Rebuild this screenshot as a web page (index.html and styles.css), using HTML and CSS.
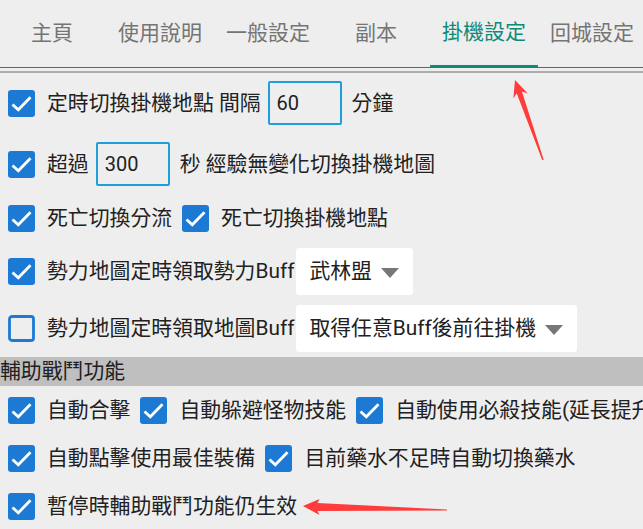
FILE: index.html
```html
<!DOCTYPE html>
<html>
<head>
<meta charset="utf-8">
<link rel="stylesheet" href="styles.css">
</head>
<body>
<div class="page">
  <div class="tabbar">
    <div class="tabs">
      <div class="tab">主頁</div>
      <div class="tab">使用說明</div>
      <div class="tab">一般設定</div>
      <div class="tab">副本</div>
      <div class="tab active">掛機設定</div>
      <div class="tab">回城設定</div>
    </div>
  </div>
  <div class="divider"></div>

  <div class="settings">
    <div class="row row-input r1">
      <div class="item first">
        <svg class="cb" viewBox="0 0 27 27"><rect width="27" height="27" rx="3" class="cb-fill"/><path d="M4.5 14.5 L10.3 19.8 L22.5 7.3" class="cb-mark"/></svg>
        <span class="label">定時切換掛機地點 間隔</span>
      </div>
      <div class="num">60</div>
      <span class="label after">分鐘</span>
    </div>

    <div class="row row-input r2">
      <div class="item first">
        <svg class="cb" viewBox="0 0 27 27"><rect width="27" height="27" rx="3" class="cb-fill"/><path d="M4.5 14.5 L10.3 19.8 L22.5 7.3" class="cb-mark"/></svg>
        <span class="label">超過</span>
      </div>
      <div class="num">300</div>
      <span class="label after">秒 經驗無變化切換掛機地圖</span>
    </div>

    <div class="row row-plain r3">
      <div class="item first">
        <svg class="cb" viewBox="0 0 27 27"><rect width="27" height="27" rx="3" class="cb-fill"/><path d="M4.5 14.5 L10.3 19.8 L22.5 7.3" class="cb-mark"/></svg>
        <span class="label">死亡切換分流</span>
      </div>
      <div class="item">
        <svg class="cb" viewBox="0 0 27 27"><rect width="27" height="27" rx="3" class="cb-fill"/><path d="M4.5 14.5 L10.3 19.8 L22.5 7.3" class="cb-mark"/></svg>
        <span class="label">死亡切換掛機地點</span>
      </div>
    </div>

    <div class="row row-spinner r4">
      <div class="item first">
        <svg class="cb" viewBox="0 0 27 27"><rect width="27" height="27" rx="3" class="cb-fill"/><path d="M4.5 14.5 L10.3 19.8 L22.5 7.3" class="cb-mark"/></svg>
        <span class="label">勢力地圖定時領取勢力Buff</span>
      </div>
      <div class="spinner">
        <span class="label">武林盟</span>
        <span class="caret"></span>
      </div>
    </div>

    <div class="row row-spinner r5">
      <div class="item first">
        <svg class="cb" viewBox="0 0 27 27"><rect x="1.5" y="1.5" width="24" height="24" rx="2.5" class="cb-empty"/></svg>
        <span class="label">勢力地圖定時領取地圖Buff</span>
      </div>
      <div class="spinner">
        <span class="label">取得任意Buff後前往掛機</span>
        <span class="caret"></span>
      </div>
    </div>

    <div class="section">輔助戰鬥功能</div>

    <div class="row row-tall">
      <div class="item first">
        <svg class="cb" viewBox="0 0 27 27"><rect width="27" height="27" rx="3" class="cb-fill"/><path d="M4.5 14.5 L10.3 19.8 L22.5 7.3" class="cb-mark"/></svg>
        <span class="label">自動合擊</span>
      </div>
      <div class="item">
        <svg class="cb" viewBox="0 0 27 27"><rect width="27" height="27" rx="3" class="cb-fill"/><path d="M4.5 14.5 L10.3 19.8 L22.5 7.3" class="cb-mark"/></svg>
        <span class="label">自動躲避怪物技能</span>
      </div>
      <div class="item">
        <svg class="cb" viewBox="0 0 27 27"><rect width="27" height="27" rx="3" class="cb-fill"/><path d="M4.5 14.5 L10.3 19.8 L22.5 7.3" class="cb-mark"/></svg>
        <span class="label">自動使用必殺技能(延長提升時間)</span>
      </div>
    </div>

    <div class="row row-tall">
      <div class="item first">
        <svg class="cb" viewBox="0 0 27 27"><rect width="27" height="27" rx="3" class="cb-fill"/><path d="M4.5 14.5 L10.3 19.8 L22.5 7.3" class="cb-mark"/></svg>
        <span class="label">自動點擊使用最佳裝備</span>
      </div>
      <div class="item">
        <svg class="cb" viewBox="0 0 27 27"><rect width="27" height="27" rx="3" class="cb-fill"/><path d="M4.5 14.5 L10.3 19.8 L22.5 7.3" class="cb-mark"/></svg>
        <span class="label">目前藥水不足時自動切換藥水</span>
      </div>
    </div>

    <div class="row row-tall">
      <div class="item first">
        <svg class="cb" viewBox="0 0 27 27"><rect width="27" height="27" rx="3" class="cb-fill"/><path d="M4.5 14.5 L10.3 19.8 L22.5 7.3" class="cb-mark"/></svg>
        <span class="label">暫停時輔助戰鬥功能仍生效</span>
      </div>
    </div>
  </div>

  <svg class="arrows" viewBox="0 0 643 529" width="643" height="529">
    <polygon class="arrow" points="515,80 527.8,93.5 521.9,91.4 543.7,159.8 542.3,160.2 516.7,93.2 513.4,98.6"/>
    <polygon class="arrow" points="303,506 319.5,499 317.5,503 447,509.5 447,510.5 317.5,511 319.5,515"/>
  </svg>
</div>
</body>
</html>
```

FILE: styles.css
```css
html, body {
  margin: 0;
  padding: 0;
}

body {
  width: 643px;
  height: 529px;
  overflow: hidden;
  background: #eeeeee;
  font-family: Roboto, "Noto Sans CJK TC", sans-serif;
  color: #212121;
}

.page {
  position: relative;
  width: 643px;
  height: 529px;
  overflow: hidden;
}

.tabbar {
  height: 67px;
  border-bottom: 1px solid #0d8a78;
  overflow: hidden;
}

.tabs {
  display: flex;
  margin-left: -2px;
  height: 67px;
}

.tab {
  flex: 0 0 108px;
  width: 108px;
  height: 67px;
  box-sizing: border-box;
  display: flex;
  align-items: center;
  justify-content: center;
  font-size: 21px;
  line-height: 1;
  color: #757575;
  white-space: nowrap;
  padding-bottom: 1px;
}

.tab.active {
  color: #0d8a78;
  border-bottom: 2px solid #0d8a78;
  padding-bottom: 0;
}

.divider {
  margin-top: 3px;
  height: 2px;
  background: #adadad;
}

.settings {
  display: flex;
  flex-direction: column;
}

.row {
  display: flex;
  align-items: center;
  white-space: nowrap;
  font-size: 20.85px;
  line-height: 1;
}

.r1 { margin-top: 8px; }
.r2 { margin-top: 17px; }
.r3 { margin-top: 18px; }
.r4 { margin-top: 16px; }
.r5 { margin-top: 10px; }

.row-input { height: 44px; }
.row-plain { height: 28px; }
.row-spinner { height: 47px; }
.row-tall { height: 48px; }

.item {
  display: flex;
  align-items: center;
  gap: 12px;
  margin-left: 10px;
  flex-shrink: 0;
}

.item.first {
  margin-left: 8px;
}

.cb {
  width: 27px;
  height: 27px;
  flex-shrink: 0;
  display: block;
}

.cb-fill {
  fill: #1c7ad4;
}

.cb-mark {
  fill: none;
  stroke: #ffffff;
  stroke-width: 2.8;
}

.cb-empty {
  fill: none;
  stroke: #1c7ad4;
  stroke-width: 2.8;
}

.label {
  white-space: nowrap;
}

.label.after {
  margin-left: 10px;
}

.num {
  width: 74px;
  height: 44px;
  box-sizing: border-box;
  border: 2px solid #1e9edb;
  border-radius: 2px;
  margin-left: 7px;
  padding-left: 7px;
  display: flex;
  align-items: center;
  font-size: 20px;
  color: #212121;
  flex-shrink: 0;
}

.spinner {
  height: 47px;
  margin-left: 2px;
  padding: 0 14px 0 13px;
  background: #ffffff;
  border-radius: 3px;
  display: flex;
  align-items: center;
  gap: 9px;
  flex-shrink: 0;
}

.caret {
  width: 0;
  height: 0;
  border-left: 9.5px solid transparent;
  border-right: 9.5px solid transparent;
  border-top: 10px solid #777777;
  margin-top: 2px;
}

.section {
  margin-top: 5px;
  height: 29px;
  background: #bfbfbf;
  font-size: 20.85px;
  line-height: 29px;
  white-space: nowrap;
  color: #212121;
}

.arrows {
  position: absolute;
  left: 0;
  top: 0;
  pointer-events: none;
}

.arrow {
  fill: #ff3b3b;
}
```
